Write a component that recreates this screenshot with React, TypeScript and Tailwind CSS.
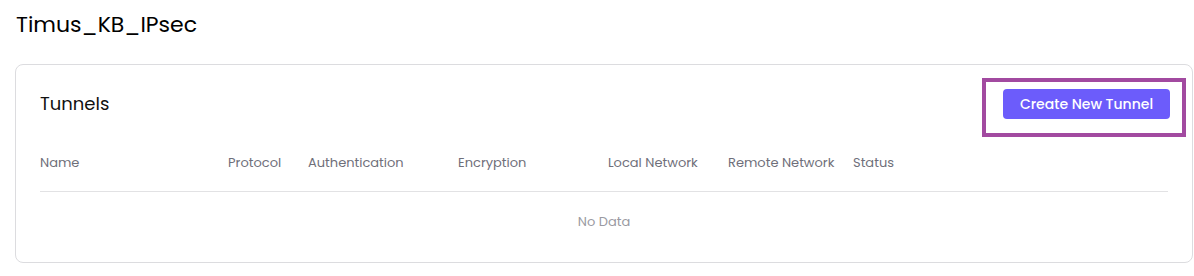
const columns = [
  { label: "Name", width: "w-[188px]" },
  { label: "Protocol", width: "w-[80px]" },
  { label: "Authentication", width: "w-[150px]" },
  { label: "Encryption", width: "w-[150px]" },
  { label: "Local Network", width: "w-[120px]" },
  { label: "Remote Network", width: "w-[125px]" },
  { label: "Status", width: "flex-1" },
];

export default function App() {
  return (
    <div className="min-h-[276px] bg-white font-['Poppins','Inter',sans-serif] text-[#111]">
      <h1 className="pl-4 pt-[11px] text-[22px] leading-[28px] font-normal text-black">Timus_KB_IPsec</h1>

      <div className="ml-[15px] mt-[25px] w-[1178px] rounded-lg border border-[#dcdcdf] px-6 pb-[31px] pt-[13px]">
        {/* Header */}
        <div className="flex items-start justify-between">
          <h2 className="mt-[14px] text-[18px] leading-6 text-[#111]">Tunnels</h2>
          <div className="mr-[-18px] border-4 border-[#a24aa0] pb-[14px] pl-[17px] pr-[12px] pt-[7px]">
            <button className="h-[30px] w-[167px] rounded-[4px] bg-[#6c5cfb] text-[14px] font-medium text-white">
              Create New Tunnel
            </button>
          </div>
        </div>

        {/* Table */}
        <div className="mt-[17px] flex border-b border-[#e2e2e4] pb-[19px]">
          {columns.map((c) => (
            <div key={c.label} className={`${c.width} text-[13px] leading-[18px] text-[#6f6f7a]`}>
              {c.label}
            </div>
          ))}
        </div>
        <div className="pt-[21px] text-center text-[13px] leading-[18px] text-[#9a9aa2]">No Data</div>
      </div>
    </div>
  );
}
